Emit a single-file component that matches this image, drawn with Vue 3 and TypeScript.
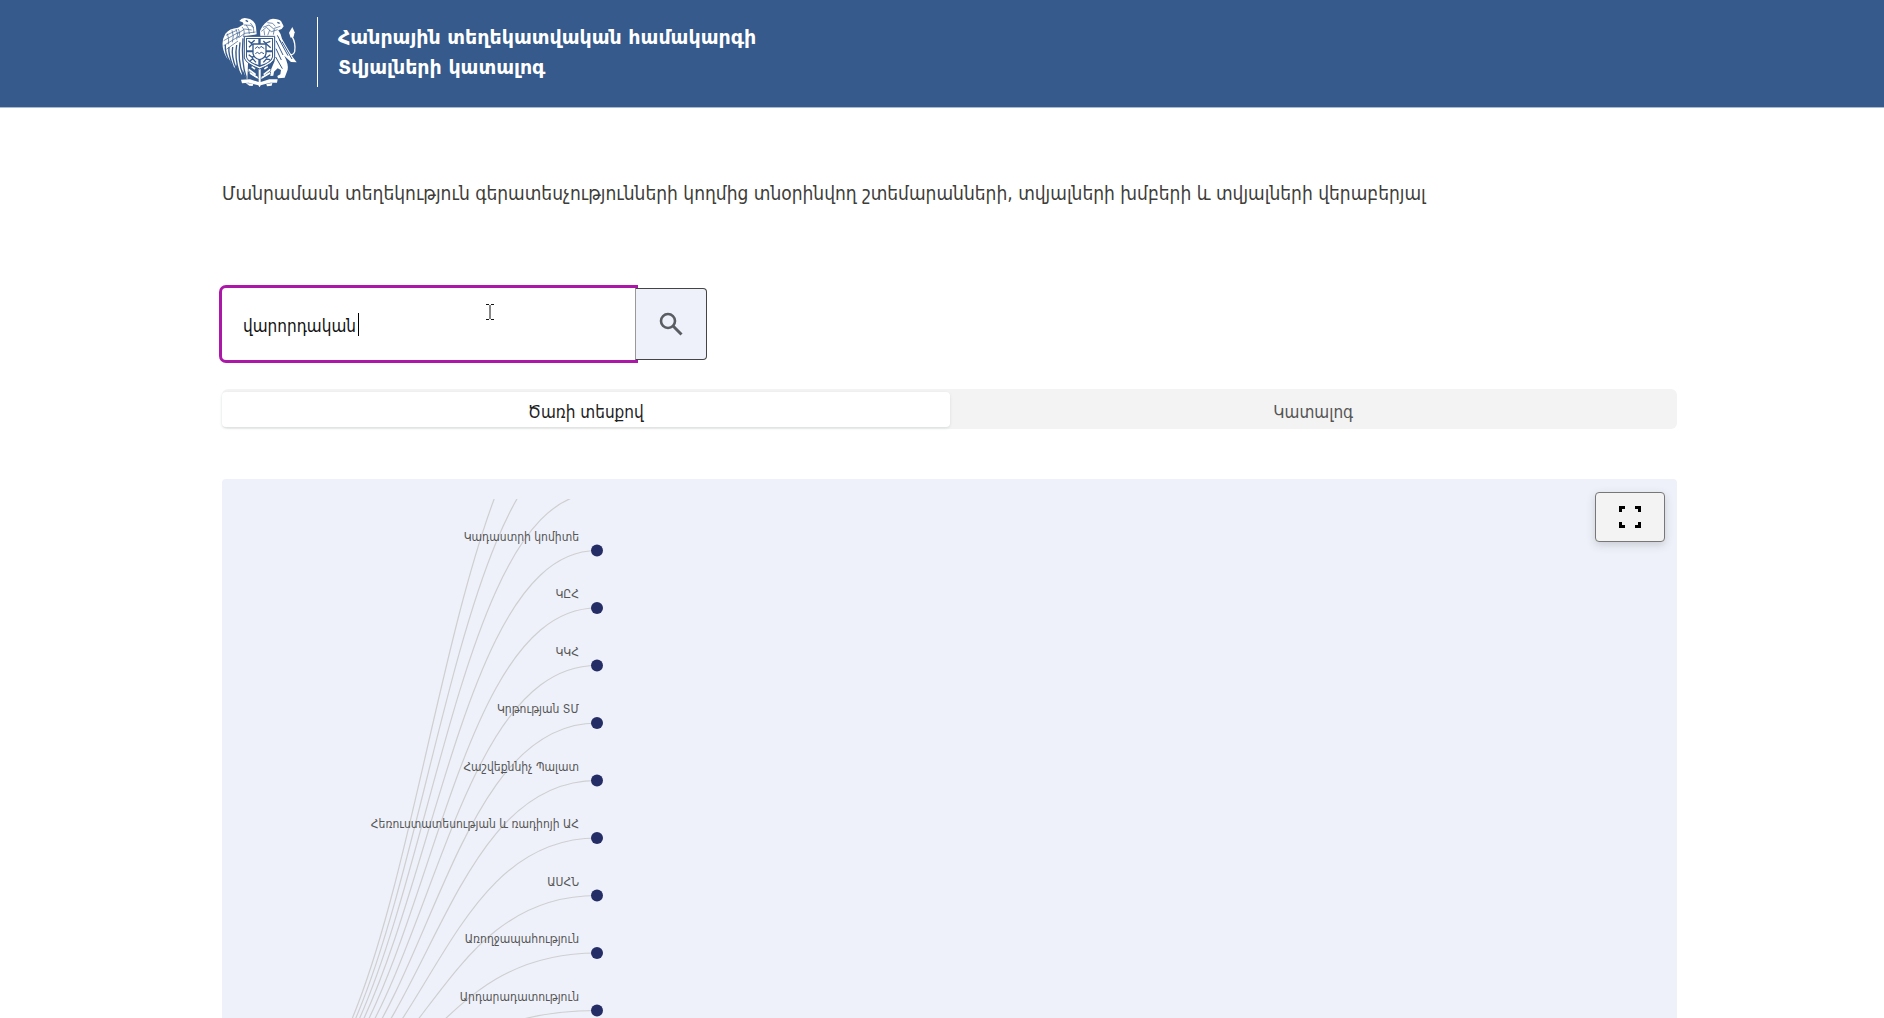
<script setup lang="ts">
import { ref } from 'vue'

interface TreeNode {
  label: string
  y: number
}

const query = ref('վարորդական')
const activeTab = ref(0)
const tabs: string[] = ['Ծառի տեսքով', 'Կատալոգ']

const labels: string[] = [
  '', '', '',
  'Կադաստրի կոմիտե',
  'ԿԸՀ',
  'ԿԿՀ',
  'Կրթության ՏՄ',
  'Հաշվեքննիչ Պալատ',
  'Հեռուստատեսության և ռադիոյի ԱՀ',
  'ԱՍՀՆ',
  'Առողջապահություն',
  'Արդարադատություն',
]

const root = { x: 35, y: 621 }
const nodeX = 375
const firstY = -121
const step = 57.5

const nodes: TreeNode[] = labels.map((label, i) => ({ label, y: firstY + i * step }))

function link(node: TreeNode): string {
  const mid = (root.x + nodeX) / 2
  return `M${root.x},${root.y}C${mid},${root.y} ${mid},${node.y} ${nodeX},${node.y}`
}
</script>

<template>
  <div class="page">
    <header class="header">
      <svg class="emblem" viewBox="33 48 228 210" aria-hidden="true">
        <g fill="#fff">
          <!-- eagle -->
          <path d="M88 60Q96 49 109 52Q121 52 129 60Q138 68 138 78L140 100L104 106L103 122Q106 140 115 165L112 236Q104 222 98 206L96 222Q84 206 78 190L77 203Q66 193 60 180Q46 170 40 146Q33 120 46 98Q58 82 84 80L101 70L98 64Z" />
          <!-- lion -->
          <path d="M150 90Q157 72 171 62Q181 50 196 54Q214 56 216 66L221 76L215 84L205 88Q214 100 216 113Q232 142 248 168L260 184L243 183Q233 174 223 164Q236 190 233 206L224 230L204 232L202 225L211 220L213 207L203 202L192 212L190 224L181 225L184 203L194 180V107L151 105Z" />
          <path d="M237 95L247 78L254 94L251 107L242 110Z" />
          <!-- ribbon and sword -->
          <path d="M93 236L120 235L146 243V204H152V243L178 235L203 235L201 245L181 245L152 253L149 259L145 253L116 245L96 247Z" />
          <path d="M107 246L130 248L128 255L118 254ZM169 249L187 246L185 254L171 256Z" />
        </g>
        <path d="M246 106Q258 126 254 152Q249 168 231 155" fill="none" stroke="#fff" stroke-width="4" />
        <g fill="none" stroke="#355a8b" stroke-width="3">
          <path d="M48 103L80 88M41 119L86 94M41 134L88 105M49 145L84 120M52 98Q58 112 55 130M66 88Q73 105 67 124M78 84Q86 98 80 116" stroke-width="2" />
          <path d="M60 184Q44 156 46 132M69 196Q54 158 57 138M79 204Q63 166 68 138M88 215Q73 170 80 132M99 222Q82 178 90 124M109 230Q93 184 99 112" stroke-width="4" />
          <path d="M84 84Q92 94 86 111M96 78Q107 88 100 108M108 71Q119 83 118 99M121 66Q133 77 131 96M83 98L104 84L125 87M88 109L104 97L137 93M102 72L121 73L132 80" stroke-width="2" />
          <path d="M154 91L169 79L184 92L203 86M159 79L177 72L190 83L211 76M172 65L188 67L196 76M179 87L173 103M193 84L190 101M162 88L164 103" stroke-width="2" />
          <path d="M202 103L213 124M198 119L219 162M208 116L234 164M216 122L246 174M198 143L214 177M197 168L217 203" />
          <path d="M107 58L114 62M202 64L209 67" stroke-width="4" />
        </g>
        <g fill="none" stroke="#fff" stroke-width="2">
          <path d="M116 205L137 221M125 197L135 204M120 216L143 230M181 205L161 221M173 197L163 204M180 216L155 230" stroke-width="5" />
          <path d="M112 207Q126 222 146 233M186 207Q172 222 153 233" />
        </g>
        <!-- shield -->
        <path d="M103 106H194V171Q190 188 149 204Q108 188 103 171Z" fill="#fff" stroke="#355a8b" stroke-width="3" />
        <path d="M108 111H189V168Q186 184 149 198Q111 184 108 168Z" fill="#355a8b" />
        <path d="M111 114H145V148H111ZM152 114H186V148H152ZM111 154H145V192Q114 182 111 168ZM152 154H186V168Q182 183 152 192Z" fill="#fff" />
        <path d="M115 119L124 127L134 118M117 139L126 130L139 135M160 137L169 126L181 121M160 120L170 130L182 140M116 161L127 169L139 160M119 181L128 173L138 184M159 161L169 170L181 161M160 184L169 174L180 176" fill="none" stroke="#355a8b" stroke-width="4" />
        <path d="M129 129H168V158Q165 172 149 176Q132 172 129 158Z" fill="#fff" stroke="#355a8b" stroke-width="4" />
        <path d="M135 143L142 137L148 142L153 136L163 143M136 158L142 154L148 158L154 154L162 158" fill="none" stroke="#355a8b" stroke-width="3" />
      </svg>
      <div class="titles">
        <div>Հանրային տեղեկատվական համակարգի</div>
        <div>Տվյալների կատալոգ</div>
      </div>
    </header>

    <main class="content">
      <p class="intro">Մանրամասն տեղեկություն գերատեսչությունների կողմից տնօրինվող շտեմարանների, տվյալների խմբերի և տվյալների վերաբերյալ</p>

      <form class="search" role="search" @submit.prevent>
        <input v-model="query" class="field" type="text" aria-label="Որոնում" />
        <span class="caret"></span>
        <svg class="ibeam" width="8" height="16" viewBox="0 0 8 16" aria-hidden="true">
          <path d="M0 .5H3M5 .5H8M0 15.5H3M5 15.5H8M4 1V15" fill="none" stroke="#111" />
        </svg>
        <button class="go" type="submit" aria-label="Որոնել">
          <svg width="24" height="24" viewBox="0 0 24 24" aria-hidden="true">
            <circle cx="9" cy="9" r="7" fill="none" stroke="#5a5d62" stroke-width="2.6" />
            <path d="M13.800 13.800L22.500 22.500" stroke="#5a5d62" stroke-width="3" />
          </svg>
        </button>
      </form>

      <div class="tabs" role="tablist">
        <button
          v-for="(tab, i) in tabs"
          :key="tab"
          class="tab"
          :class="{ active: i === activeTab }"
          type="button"
          role="tab"
          :aria-selected="i === activeTab"
          @click="activeTab = i"
        >{{ tab }}</button>
      </div>

      <section class="canvas">
        <svg class="tree">
          <path v-for="n in nodes" :key="n.y" :d="link(n)" class="link" />
          <g v-for="n in nodes" :key="n.y">
            <circle :cx="nodeX" :cy="n.y" r="6" class="dot" />
            <text :x="nodeX - 18" :y="n.y - 10" class="label">{{ n.label }}</text>
          </g>
        </svg>
        <button class="expand" type="button" aria-label="Ամբողջ էկրանով">
          <svg width="24" height="24" viewBox="0 0 24 24" aria-hidden="true">
            <path d="M2.500 7V2.500H7M17 2.500H21.500V7M21.500 17V21.500H17M7 21.500H2.500V17" fill="none" stroke="#000" stroke-width="3" />
          </svg>
        </button>
      </section>
    </main>
  </div>
</template>

<style>
body {
  margin: 0;
}
</style>

<style scoped>
.page {
  display: flex;
  flex-direction: column;
  height: 100vh;
  background: #fff;
  font-family: "DejaVu Sans Condensed", "DejaVu Sans", sans-serif;
}

button,
input {
  font-family: inherit;
}

.header {
  display: flex;
  align-items: center;
  gap: 20px;
  box-sizing: border-box;
  height: 108px;
  padding: 0 207px 4px 221px;
  background: #355a8b;
  border-bottom: 1px solid #a9b9cf;
  flex: none;
}

.emblem {
  width: 76px;
  height: 70px;
}

.titles {
  padding: 5px 0 5px 20px;
  border-left: 1px solid #fff;
  color: #fff;
  font-family: "DejaVu Sans", sans-serif;
  font-size: 19px;
  font-weight: 700;
  line-height: 30px;
}

.content {
  display: flex;
  flex-direction: column;
  flex: 1;
  min-height: 0;
  padding: 0 207px 0 222px;
}

.intro {
  margin: 70px 0 80px;
  color: #3d3d3a;
  font-size: 19px;
  line-height: 30px;
}

.search {
  position: relative;
  display: flex;
  width: 485px;
  height: 72px;
  margin: 0;
}

.field {
  flex: 1;
  min-width: 0;
  padding: 3px 20px 0 21px;
  border: 0;
  border-radius: 4px 0 0 4px;
  outline: 0;
  box-shadow: 0 0 0 3px #ab18a7;
  caret-color: transparent;
  color: #111;
  font-size: 17px;
}

.caret {
  position: absolute;
  left: 136px;
  top: 25px;
  width: 1px;
  height: 23px;
  background: #000;
}

.ibeam {
  position: absolute;
  left: 264px;
  top: 16px;
}

.go {
  position: relative;
  display: flex;
  align-items: center;
  justify-content: center;
  width: 72px;
  padding: 0;
  background: #eef1f9;
  border: 1px solid #444;
  border-left-color: #999;
  border-radius: 0 4px 4px 0;
}

.tabs {
  display: flex;
  box-sizing: border-box;
  height: 40px;
  margin-top: 29px;
  padding: 3px 0 2px;
  background: #f3f3f3;
  border-radius: 6px;
  flex: none;
}

.tab {
  flex: 1;
  padding: 4px 0 0;
  background: none;
  border: 0;
  border-radius: 4px;
  color: #555;
  font-size: 17px;
}

.tab.active {
  background: #fff;
  box-shadow: 0 1px 3px #d8dcdc;
  color: #222;
}

.canvas {
  position: relative;
  display: flex;
  flex: 1;
  min-height: 0;
  margin-top: 50px;
  padding-top: 20px;
  background: #eef1f9;
  border-radius: 4px 4px 0 0;
}

.tree {
  display: block;
  flex: 1;
  min-width: 0;
  overflow: hidden;
}

.link {
  fill: none;
  stroke: #cfcfd1;
  stroke-width: 1.2;
}

.dot {
  fill: #252d66;
}

.label {
  fill: #555;
  font-size: 12px;
  text-anchor: end;
}

.expand {
  position: absolute;
  top: 13px;
  right: 12px;
  display: flex;
  align-items: center;
  justify-content: center;
  width: 70px;
  height: 50px;
  padding: 0;
  background: #f3f3f3;
  border: 1px solid #777;
  border-radius: 4px;
  box-shadow: 0 3px 8px #c9ccd4;
}
</style>
